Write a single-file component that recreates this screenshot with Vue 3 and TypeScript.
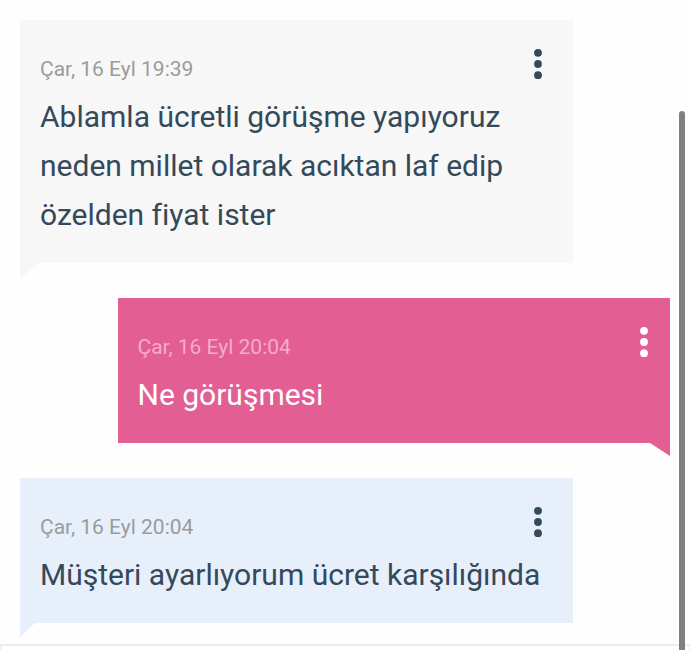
<script setup lang="ts">
interface Message {
  id: number
  kind: 'received' | 'sent' | 'highlighted'
  time: string
  text: string
}

const messages: Message[] = [
  {
    id: 1,
    kind: 'received',
    time: 'Çar, 16 Eyl 19:39',
    text: 'Ablamla ücretli görüşme yapıyoruz neden millet olarak acıktan laf edip özelden fiyat ister',
  },
  { id: 2, kind: 'sent', time: 'Çar, 16 Eyl 20:04', text: 'Ne görüşmesi' },
  { id: 3, kind: 'highlighted', time: 'Çar, 16 Eyl 20:04', text: 'Müşteri ayarlıyorum ücret karşılığında' },
]
</script>

<template>
  <main class="chat" lang="tr">
    <section class="messages">
      <article v-for="message in messages" :key="message.id" class="bubble" :class="message.kind">
        <header class="bubble-head">
          <time class="time">{{ message.time }}</time>
          <button class="menu" type="button" aria-label="Menü">
            <svg width="8" height="32" viewBox="0 0 8 32" fill="currentColor" aria-hidden="true">
              <circle cx="4" cy="4.8" r="3.9" />
              <circle cx="4" cy="16" r="3.9" />
              <circle cx="4" cy="27.2" r="3.9" />
            </svg>
          </button>
        </header>
        <p class="text">{{ message.text }}</p>
      </article>
    </section>
    <div class="composer"></div>
    <div class="scroll-thumb"></div>
  </main>
</template>

<style>
body {
  margin: 0;
  background: #fefefe;
}
</style>

<style scoped>
.chat {
  position: relative;
  display: flex;
  flex-direction: column;
  height: 100vh;
  overflow: hidden;
  font-family: Roboto, "Noto Sans", sans-serif;
  font-variant-ligatures: none;
  color: #34495a;
}

.messages {
  flex: none;
  display: flex;
  flex-direction: column;
  gap: 35px;
  padding: 20px 20px 21px;
}

.bubble {
  position: relative;
  box-sizing: border-box;
  width: 85%;
  padding: 24px 20px;
  background: #f7f7f7;
}

.bubble::after {
  content: "";
  position: absolute;
  top: 100%;
  left: 0;
  width: 18px;
  height: 17px;
  background: inherit;
  clip-path: polygon(0 0, 100% 0, 0 100%);
}

.highlighted {
  background: #e7effb;
}

.highlighted::after {
  width: 15px;
  height: 14px;
}

.sent {
  align-self: flex-end;
  background: #e35e93;
  color: #fff;
}

.sent::after {
  right: 0;
  left: auto;
  width: 20px;
  height: 13px;
  clip-path: polygon(0 0, 100% 0, 100% 100%);
}

.bubble-head {
  display: flex;
  align-items: flex-start;
  justify-content: space-between;
  height: 48px;
}

.time {
  font-size: 21px;
  line-height: 51px;
  color: #9b9b9b;
}

.sent .time {
  color: #f4adc9;
}

.menu {
  display: flex;
  align-items: center;
  justify-content: center;
  width: 30px;
  height: 40px;
  padding: 0;
  border: 0;
  background: none;
  color: inherit;
  cursor: pointer;
}

.sent .menu {
  width: 12px;
}

.text {
  margin: 0;
  font-size: 30px;
  line-height: 49px;
}

.composer {
  flex: 1 0 0;
  border: solid #ebebeb;
  border-width: 2px 1px 0;
  background: #fff;
}

.scroll-thumb {
  position: absolute;
  top: 111px;
  right: 5px;
  bottom: 0;
  width: 6px;
  border-radius: 3px 3px 0 0;
  background: #808080;
}
</style>
